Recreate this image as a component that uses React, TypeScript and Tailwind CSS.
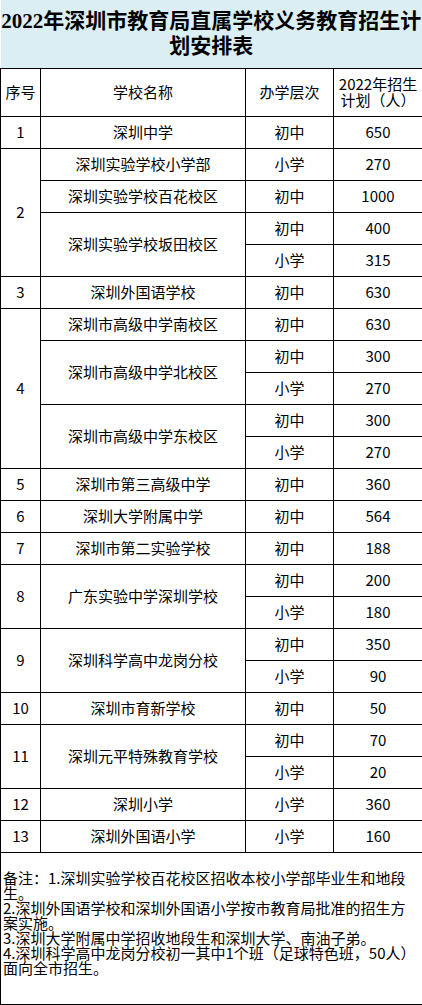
import React from "react"

type School = { name: string; levels: [string, number][] }
type Group = { seq: number; schools: School[] }

const groups: Group[] = [
  { seq: 1, schools: [{ name: "深圳中学", levels: [["初中", 650]] }] },
  {
    seq: 2,
    schools: [
      { name: "深圳实验学校小学部", levels: [["小学", 270]] },
      { name: "深圳实验学校百花校区", levels: [["初中", 1000]] },
      { name: "深圳实验学校坂田校区", levels: [["初中", 400], ["小学", 315]] },
    ],
  },
  { seq: 3, schools: [{ name: "深圳外国语学校", levels: [["初中", 630]] }] },
  {
    seq: 4,
    schools: [
      { name: "深圳市高级中学南校区", levels: [["初中", 630]] },
      { name: "深圳市高级中学北校区", levels: [["初中", 300], ["小学", 270]] },
      { name: "深圳市高级中学东校区", levels: [["初中", 300], ["小学", 270]] },
    ],
  },
  { seq: 5, schools: [{ name: "深圳市第三高级中学", levels: [["初中", 360]] }] },
  { seq: 6, schools: [{ name: "深圳大学附属中学", levels: [["初中", 564]] }] },
  { seq: 7, schools: [{ name: "深圳市第二实验学校", levels: [["初中", 188]] }] },
  { seq: 8, schools: [{ name: "广东实验中学深圳学校", levels: [["初中", 200], ["小学", 180]] }] },
  { seq: 9, schools: [{ name: "深圳科学高中龙岗分校", levels: [["初中", 350], ["小学", 90]] }] },
  { seq: 10, schools: [{ name: "深圳市育新学校", levels: [["初中", 50]] }] },
  { seq: 11, schools: [{ name: "深圳元平特殊教育学校", levels: [["初中", 70], ["小学", 20]] }] },
  { seq: 12, schools: [{ name: "深圳小学", levels: [["小学", 360]] }] },
  { seq: 13, schools: [{ name: "深圳外国语小学", levels: [["小学", 160]] }] },
]

// one text block, lines broken as in the original sheet
const notes = [
  "备注：1.深圳实验学校百花校区招收本校小学部毕业生和地段",
  "生。",
  "2.深圳外国语学校和深圳外国语小学按市教育局批准的招生方",
  "案实施。",
  "3.深圳大学附属中学招收地段生和深圳大学、南油子弟。",
  "4.深圳科学高中龙岗分校初一其中1个班（足球特色班，50人）",
  "面向全市招生。",
].join("\n")

const cell = "border border-black text-center align-middle p-0"

export default function App() {
  const rows: React.ReactNode[] = []

  groups.forEach((g) => {
    const total = g.schools.reduce((n, s) => n + s.levels.length, 0)
    let first = true
    g.schools.forEach((s) => {
      s.levels.forEach(([level, count], i) => {
        rows.push(
          <tr key={`${g.seq}-${s.name}-${i}`} className="h-[32px]">
            {first && (
              <td rowSpan={total} className={cell}>
                {g.seq}
              </td>
            )}
            {i === 0 && (
              <td rowSpan={s.levels.length} className={cell}>
                {s.name}
              </td>
            )}
            <td className={cell}>{level}</td>
            <td className={cell}>{count}</td>
          </tr>
        )
        first = false
      })
    })
  })

  return (
    <div className="w-[422px] bg-white text-black font-['Noto_Sans_CJK_SC',sans-serif] text-[15px]">
      <table className="w-[422px] table-fixed border-collapse">
        <colgroup>
          <col className="w-[40px]" />
          <col className="w-[205px]" />
          <col className="w-[88px]" />
          <col className="w-[89px]" />
        </colgroup>
        <tbody>
          {/* title */}
          <tr className="h-[68px]">
            <td
              colSpan={4}
              className="bg-[#daeef3] border-r border-b border-black text-center align-middle p-0 font-['Liberation_Serif','Noto_Sans_CJK_SC',serif] font-bold text-[21px] leading-[25px] whitespace-pre-line"
            >
              {"2022年深圳市教育局直属学校义务教育招生计\n划安排表"}
            </td>
          </tr>

          {/* header */}
          <tr className="h-[48px]">
            <td className={cell}>序号</td>
            <td className={cell}>学校名称</td>
            <td className={cell}>办学层次</td>
            <td className={`${cell} leading-[16px] whitespace-pre-line`}>{"2022年招生\n计划（人）"}</td>
          </tr>

          {rows}

          {/* notes */}
          <tr className="h-[152px]">
            <td colSpan={4} className="border border-black align-top pt-[17px] pl-[2px] leading-[15px] whitespace-pre">
              {notes}
            </td>
          </tr>
        </tbody>
      </table>
    </div>
  )
}
